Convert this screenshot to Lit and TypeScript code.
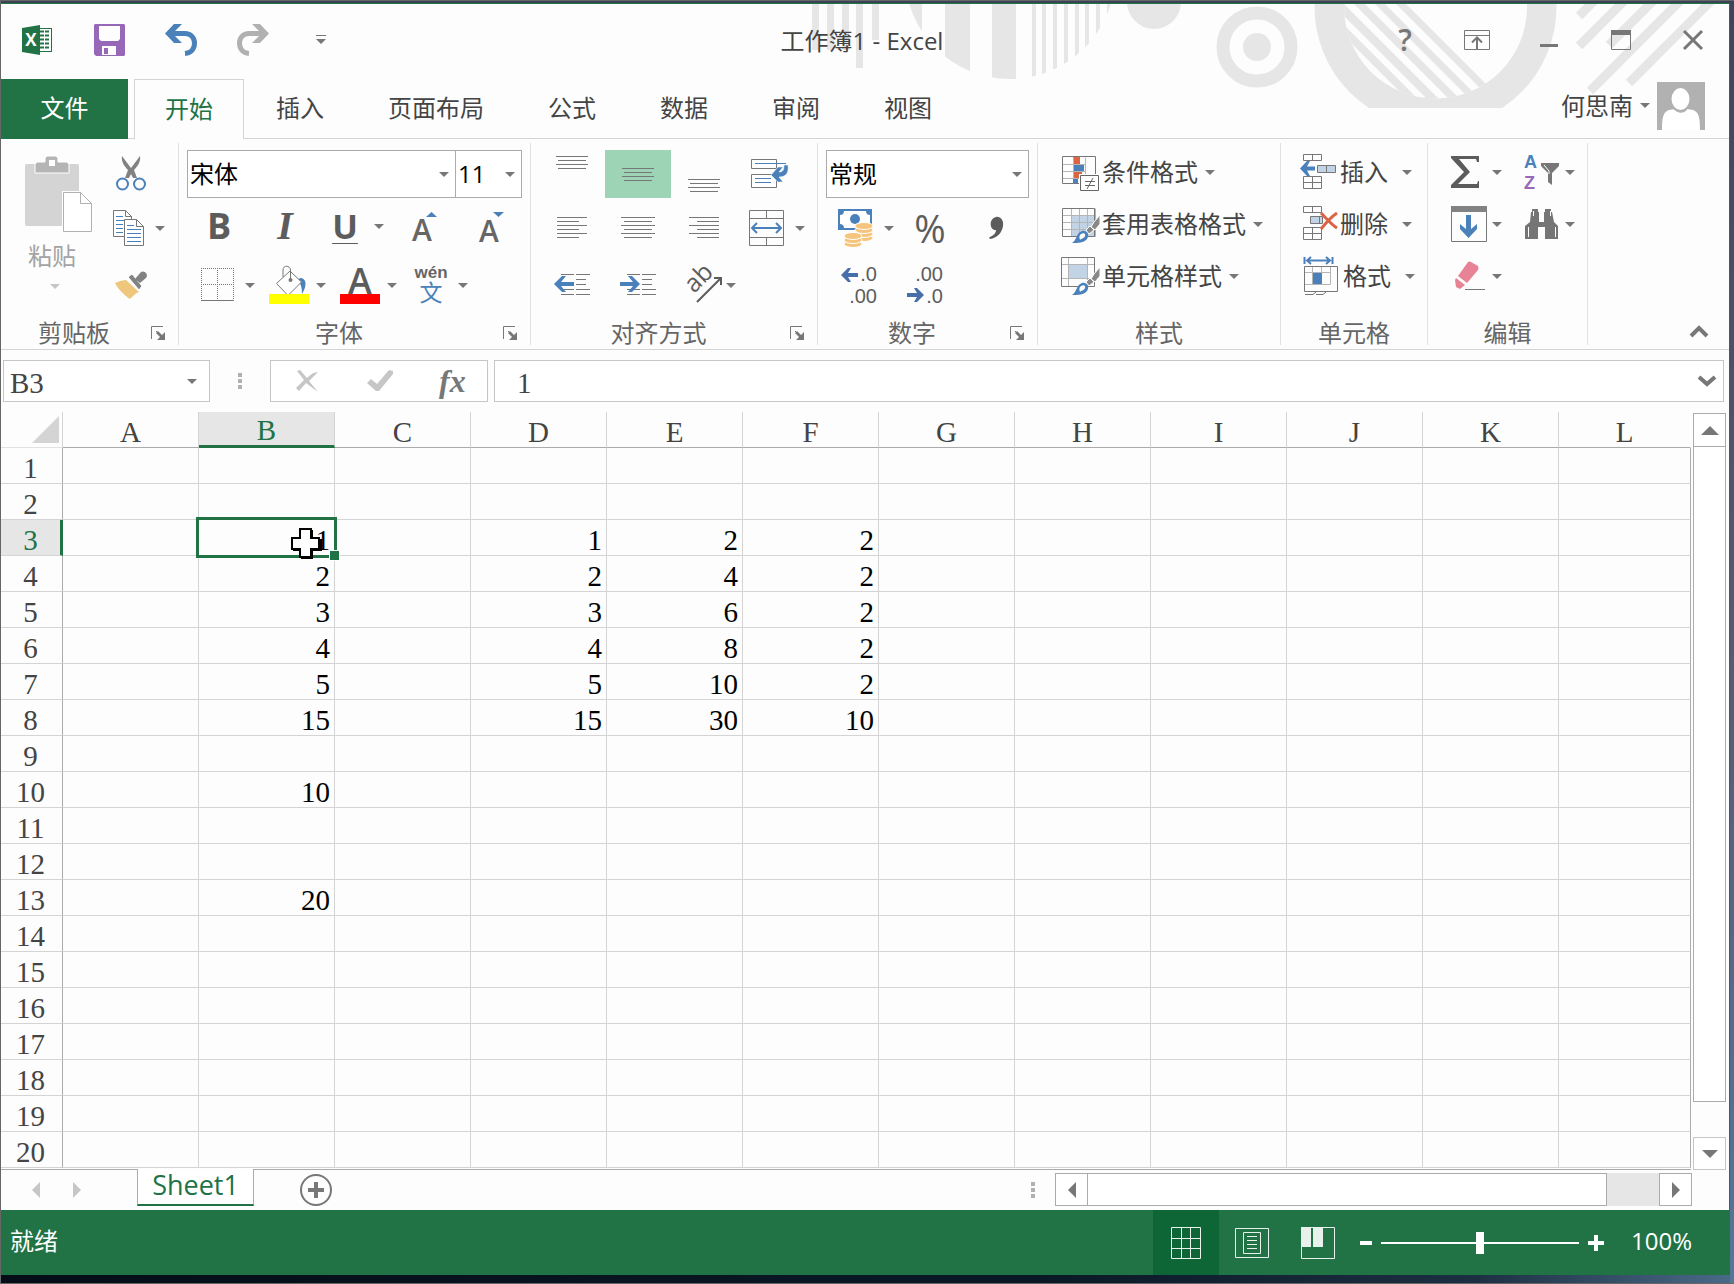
import { LitElement, html, svg, css, nothing, TemplateResult, SVGTemplateResult } from "lit";
import { customElement, state } from "lit/decorators.js";
import { classMap } from "lit/directives/class-map.js";

const GRAY = "#777";
const INK = "#5c5c5c";
const BLUE = "#4b81ba";
const PALE = "#c2d3e6";

const icon = (w: number, h: number, body: SVGTemplateResult | SVGTemplateResult[]) =>
  html`<svg width=${w} height=${h} viewBox="0 0 ${w} ${h}" aria-hidden="true">${body}</svg>`;

const caret = html`<svg class="caret" width="10" height="5" viewBox="0 0 10 5" aria-hidden="true"><path d="M0 0H10L5 5Z" /></svg>`;

/** Horizontal one-pixel strokes, each given as [x1, x2, y]. */
const strokes = (rows: number[][]) =>
  rows.map(([a, b, y]) => svg`<rect x=${a} y=${y} width=${b - a} height="1" fill=${GRAY} />`);

/** Outlined table grid. */
const mesh = (x: number, y: number, xs: number[], ys: number[], color = GRAY) => svg`
  <g fill="none" stroke=${color}>
    ${xs.map((c) => svg`<path d="M${x + c}.5 ${y}.5V${y + ys[ys.length - 1]}.5" />`)}
    ${ys.map((r) => svg`<path d="M${x}.5 ${y + r}.5H${x + xs[xs.length - 1]}.5" />`)}
  </g>`;

const brushSmall = svg`
  <path d="M39 9L33 16L30 21L34 24L39 18Z" fill="#888" stroke="#fff" />
  <path d="M29 20L25 24L28 28L33 24Z" fill="#888" stroke="#fff" />
  <path d="M11 37C16 34 15 27 21 25C26 24 29 29 26 33C23 37 17 37 11 37Z" fill=${BLUE} />
  <path d="M20 28C23 26 25 28 24 30C23 33 20 32 19 34C18 31 18 30 20 28Z" fill="#fff" />`;

const icons = {
  excel: icon(30, 30, svg`
    <rect x="17.500" y="3.500" width="12" height="23" fill="#fff" stroke="#217346" />
    ${[6, 10, 14, 18, 22].map((y) => svg`<path d="M18 ${y + 0.5}h4m1 0h4" stroke="#217346" stroke-width="2" />`)}
    <path d="M0 3L18 0V30L0 27Z" fill="#217346" />
    <text x="9" y="21" text-anchor="middle" font-family="Open Sans" font-weight="700" font-size="17" fill="#fff">X</text>`),
  save: icon(31, 32, svg`
    <path fill="#9668b7" fill-rule="evenodd" d="M1 0H30L31 1V31L30 32H2L0 30V1ZM5 2V15L7 17H24L26 15V2ZM8 22V31H22V22ZM10 24H14V30H10Z" />`),
  undo: icon(32, 32, svg`
    <path d="M9 0H17L10 7H20V12H10L17 19H9L0 9.500Z" fill=${BLUE} />
    <path d="M10 9.500H20C26 9.500 29.500 14 29.500 19C29.500 25 26 29 20 29.500" fill="none" stroke=${BLUE} stroke-width="5" />`),
  redo: icon(32, 32, svg`
    <path d="M23 0H15L22 7H12V12H22L15 19H23L32 9.500Z" fill="#b1b1b1" />
    <path d="M22 9.500H12C6 9.500 2.500 14 2.500 19C2.500 25 6 29 12 29.500" fill="none" stroke="#b1b1b1" stroke-width="5" />`),
  qat: icon(10, 10, svg`<path d="M0 0H10V1H0ZM0 4H10L5 9Z" fill=${GRAY} />`),
  ribbonOptions: icon(26, 20, svg`
    <path d="M.5 .5H25.500V19.500H.5ZM0 5.500H26" fill="none" stroke=${GRAY} />
    <path d="M13 19V8M8 12.500L13 7.500L18 12.500" fill="none" stroke=${GRAY} stroke-width="2" />`),
  minimize: icon(18, 20, svg`<path d="M0 14H18V17H0Z" fill=${GRAY} />`),
  maximize: icon(20, 20, svg`<path d="M.5 .5H19.500V19.500H.5Z" fill="none" stroke=${GRAY} /><path d="M0 0H20V5H0Z" fill=${GRAY} />`),
  close: icon(20, 20, svg`<path d="M1 1L19 19M19 1L1 19" stroke=${GRAY} stroke-width="3" />`),
  avatar: icon(48, 48, svg`
    <rect width="48" height="48" fill="#b1b1b1" />
    <path d="M5 48C5 36 6 30 12 28L18 27C20 32 28 32 30 27L36 28C42 30 43 36 43 48Z" fill="#fff" />
    <ellipse cx="23.500" cy="17" rx="10" ry="12" fill="#fff" stroke="#b1b1b1" stroke-width="2" />`),
  paste: icon(68, 76, svg`
    <rect y="8" width="54" height="62" rx="2" fill="#d4d4d4" />
    <path d="M10 17V8L12 6H20V2L22 0H31L33 2V6H42L44 8V17Z" fill="#b5b5b5" stroke="#fff" />
    <rect x="24" y="4" width="6" height="6" fill="#fff" />
    <path d="M37 35H57L68 47V76H37Z" fill="#fff" />
    <path d="M38.500 36.500H55.500L66.500 47.500V75.500H38.500ZM55.500 36.500V47.500H66.500" fill="none" stroke="#b1b1b1" />`),
  cut: icon(36, 36, svg`
    <path d="M10 0C9 5 12 10 16 14L13 22H17L19 18L21 22H25L22 14C26 10 29 5 28 0L19 12Z" fill="#828282" />
    <circle cx="10.500" cy="28" r="5.500" fill="none" stroke=${BLUE} stroke-width="2" />
    <circle cx="27.500" cy="28" r="5.500" fill="none" stroke=${BLUE} stroke-width="2" />`),
  copy: icon(36, 36, svg`
    <path d="M1.500 .5H13.500L19.500 6.500V26.500H1.500ZM13.500 .5V6.500H19.500" fill="#fff" stroke=${GRAY} />
    <path d="M4 6.500H11M4 10.500H12M4 14.500H11M4 18.500H11M4 22.500H11" stroke=${BLUE} />
    <path d="M12.500 9.500H24.500L31.500 16.500V35.500H12.500ZM24.500 9.500V16.500H31.500" fill="#fff" stroke=${GRAY} />
    <path d="M15 15.500H22M15 19.500H29M15 23.500H29M15 27.500H29M15 31.500H29" stroke=${BLUE} />`),
  painter: icon(36, 28, svg`
    <path d="M3 12L8 10L14 9L27 21C24 22 21 25 18 28C12 24 6 18 3 12Z" fill="#efc77c" />
    <path d="M16 6L20 3L30 15L27 19Z" fill="#828282" stroke="#fff" />
    <path d="M23 8L29 1C32 -1 37 3 34 7L28 12Z" fill="#828282" />`),
  borders: icon(40, 36, svg`
    <path d="M3.500 1V34M19.500 1V34M35.500 1V34M3 1.500H36M3 17.500H36" fill="none" stroke=${GRAY} stroke-dasharray="1 1" />
    <path d="M3 33.500H36" stroke=${GRAY} />`),
  fill: icon(40, 38, svg`
    <path d="M31 12C38 12 38 20 33 28C33 22 32 18 29 14Z" fill=${BLUE} />
    <path d="M7.500 17.500L21 5L32.500 16L19 29.500Z" fill="#fff" stroke=${GRAY} />
    <path d="M14 11V4C14 -1 21 -1 21.500 4V14" fill="none" stroke=${GRAY} />
    <circle cx="21.500" cy="14" r="2" fill=${GRAY} />
    <rect y="28" width="40" height="10" fill="#ff0" />`),
  fontColor: icon(40, 38, svg`
    <text x="20" y="28" text-anchor="middle" font-family="Open Sans" font-weight="600" font-size="36" fill=${INK}>A</text>
    <rect y="28" width="40" height="10" fill="#f00" />`),
  phonetic: icon(40, 38, svg`
    <text x="20" y="12" text-anchor="middle" font-family="Liberation Sans" font-weight="700" font-size="17" fill="#666">wén</text>
    <text x="20" y="35" text-anchor="middle" font-family="Noto Sans CJK SC" font-size="23" fill=${BLUE}>文</text>`),
  grow: icon(40, 32, svg`
    <text x="19" y="29" text-anchor="middle" font-family="Open Sans" font-weight="600" font-size="30" fill="#666">A</text>
    <path d="M23 5L28.500 0L34 5Z" fill=${BLUE} />`),
  shrink: icon(40, 32, svg`
    <text x="18" y="30" text-anchor="middle" font-family="Open Sans" font-weight="600" font-size="30" fill="#666">A</text>
    <path d="M22 0L27.500 5L33 0Z" fill=${BLUE} />`),
  alignTop: icon(32, 38, svg`${strokes([[0, 32, 1], [2, 30, 5], [0, 32, 9], [2, 30, 13]])}`),
  alignMiddle: icon(32, 38, svg`${strokes([[0, 32, 13], [2, 30, 17], [0, 32, 21], [2, 30, 25]])}`),
  alignBottom: icon(32, 38, svg`${strokes([[0, 32, 24], [2, 30, 28], [0, 32, 32], [2, 30, 36]])}`),
  alignLeft: icon(34, 22, svg`${strokes([[2, 32, 0], [2, 24, 4], [2, 32, 8], [2, 24, 12], [2, 32, 16], [2, 24, 20]])}`),
  alignCenter: icon(34, 22, svg`${strokes([[0, 34, 0], [3, 31, 4], [0, 34, 8], [3, 31, 12], [0, 34, 16], [3, 31, 20]])}`),
  alignRight: icon(34, 22, svg`${strokes([[2, 32, 0], [10, 32, 4], [2, 32, 8], [10, 32, 12], [2, 32, 16], [10, 32, 20]])}`),
  wrap: icon(38, 30, svg`
    <path d="M.5 .5H25.500V9.500H.5ZM.5 15.500H25.500V28.500H.5Z" fill="#fff" stroke=${GRAY} />
    <path d="M4 4.500H35M4 19.500H20M4 23.500H20" stroke=${BLUE} />
    <path d="M20 16L27 8H32L28 13C32 13 33 11 33 6H37C38 14 35 18 28 18L32 23H27Z" fill=${BLUE} stroke="#fff" stroke-width=".5" />`),
  merge: icon(36, 36, svg`
    <path d="M.5 .5H34.500V35.500H.5ZM0 8.500H35M0 27.500H35M17.500 0V8M17.500 28V36" fill="none" stroke=${GRAY} />
    <path d="M3 18H32M8 13L3 18L8 23M27 13L32 18L27 23" fill="none" stroke=${BLUE} stroke-width="2" />`),
  outdent: icon(36, 22, svg`
    ${strokes([[7, 20, 0], [22, 36, 0], [22, 32, 5], [22, 32, 10], [7, 20, 15], [22, 36, 15], [7, 20, 20], [22, 36, 20]])}
    <path d="M0 10L8 2H12L7 8H20V12H7L12 18H8Z" fill=${BLUE} />`),
  indent: icon(36, 22, svg`
    ${strokes([[7, 20, 0], [22, 36, 0], [22, 32, 5], [22, 32, 10], [7, 20, 15], [22, 36, 15], [7, 20, 20], [22, 36, 20]])}
    <path d="M20 10L12 2H8L13 8H0V12H13L8 18H12Z" fill=${BLUE} />`),
  orient: icon(37, 36, svg`
    <text transform="translate(9 27) rotate(-45)" font-family="Open Sans" font-size="25" fill=${INK}>ab</text>
    <path d="M12 35L36 11M29 11H36V18" fill="none" stroke=${INK} stroke-width="2" />`),
  currency: icon(36, 38, svg`
    <path d="M0 0H34V21H0Z" fill=${BLUE} />
    <path d="M6 2H28C28 5 30 6 32 6V14C29 14 28 16 28 19H6C6 16 4 15 2 15V6C4 6 6 5 6 2Z" fill="#fff" />
    <circle cx="17" cy="10" r="5" fill=${BLUE} />
    <g fill="#f5c57d" stroke="#fff">
      <ellipse cx="26" cy="29" rx="9" ry="3.500" /><ellipse cx="26" cy="25" rx="9" ry="3.500" /><ellipse cx="26" cy="21" rx="9" ry="3.500" /><ellipse cx="26" cy="17" rx="9" ry="3.500" />
      <ellipse cx="15" cy="35" rx="9" ry="3.500" /><ellipse cx="15" cy="31" rx="9" ry="3.500" /><ellipse cx="15" cy="27" rx="9" ry="3.500" />
    </g>`),
  comma: icon(46, 24, svg`
    <path d="M23 1C27 0 31 4 30 10C29 17 24 22 17 23C16 22 16 21 17 21C21 19 23 17 23 14C17 15 15 3 23 1Z" fill=${INK} />`),
  moreDecimals: icon(40, 38, svg`
    <path d="M3 9L10 2H13L10 7H20V11H10L13 16H10Z" fill="#466ea9" />
    <g font-family="Liberation Sans" font-size="20" fill=${INK} text-anchor="end"><text x="39" y="15">.0</text><text x="39" y="37">.00</text></g>`),
  fewerDecimals: icon(40, 38, svg`
    <path d="M17 29L10 22H7L10 27H0V31H10L7 36H10Z" fill="#466ea9" />
    <g font-family="Liberation Sans" font-size="20" fill=${INK} text-anchor="end"><text x="36" y="15">.00</text><text x="36" y="37">.0</text></g>`),
  conditional: icon(40, 36, svg`
    <rect x="12" y="3" width="7" height="7" fill="#db6445" /><rect x="12" y="10" width="11" height="7" fill=${BLUE} />
    <rect x="12" y="17" width="9" height="7" fill="#db6445" /><rect x="12" y="24" width="5" height="6" fill=${BLUE} />
    ${mesh(1, 3, [11, 23], [7, 14, 21], "#b5b5b5")}
    <path d="M1.500 2.500H34.500V29.500H1.500Z" fill="none" stroke=${GRAY} />
    <rect x="18" y="20" width="21" height="17" fill="#fff" />
    <path d="M19.500 21.500H37.500V36.500H19.500ZM24 27.500H34M24 31.500H34M32 24L26 35" fill="none" stroke="#666" />`),
  tableFormat: icon(40, 36, svg`
    <rect x="10" y="9" width="24" height="21" fill=${PALE} />
    ${mesh(1, 2, [9, 17, 25, 33], [7, 14, 21, 28], "#b5b5b5")}
    <path d="M1.500 2.500H33.500V30.500H1.500Z" fill="none" stroke=${GRAY} />
    ${brushSmall}`),
  cellStyle: icon(40, 36, svg`
    <path d="M.5 6.500H34M.5 20.500H34M7.500 0V28M26.500 0V28" stroke="#b5b5b5" />
    <rect x="8" y="7" width="18" height="13" fill=${PALE} />
    <path d="M.5 -.5H33.500V28.500H.5Z" fill="none" stroke=${GRAY} />
    ${brushSmall}`),
  insertCells: icon(40, 36, svg`
    ${mesh(4, 0, [0, 9, 18], [0, 6])} ${mesh(4, 22, [0, 9, 18], [0, 6, 12])}
    <rect x="18" y="11" width="18" height="7" fill=${PALE} />${mesh(18, 11, [0, 9, 18], [0, 7])}
    <path d="M1 14.500L8 7H11L8 12.500H16V16.500H8L11 22H8Z" fill=${BLUE} />`),
  deleteCells: icon(40, 36, svg`
    ${mesh(4, 0, [0, 9, 18], [0, 6])} ${mesh(4, 21, [0, 9, 18], [0, 6, 12])}
    <rect x="11" y="10" width="12" height="7" fill=${PALE} />${mesh(11, 10, [0, 9, 12], [0, 7])}
    <path d="M22 7C27 12 33 19 38 22M38 7C32 11 26 18 22 23" fill="none" stroke="#db6445" stroke-width="3" />`),
  formatCells: icon(43, 38, svg`
    <path d="M5.500 0V7M33.500 0V7M8 3.500H31M12 0L8 3.500L12 7M27 0L31 3.500L27 7" fill="none" stroke=${BLUE} stroke-width="2" />
    ${mesh(5, 9, [8, 17, 26], [6, 18], "#b5b5b5")}
    <path d="M5.500 9.500H38.500V34.500H5.500ZM6 37.500H14L17 35M17 37.500H24L27 35" fill="none" stroke=${GRAY} />
    <rect x="14" y="16" width="9" height="11" fill=${BLUE} />`),
  sum: icon(36, 34, svg`<path d="M0 1H28V7H26L25 4H8L19 17L7 29H26L27 26H28V33H0V30L13 17L0 3Z" fill=${INK} />`),
  sort: icon(36, 36, svg`
    <text x="0" y="14" font-family="Liberation Sans" font-weight="700" font-size="18" fill=${BLUE}>A</text>
    <text x="0" y="35" font-family="Liberation Sans" font-weight="700" font-size="18" fill="#9668b7">Z</text>
    <path d="M17 9H35V12L28 19V31L24 28V19L17 12Z" fill=${GRAY} /><path d="M20 11L25 17V20" stroke="#fff" fill="none" />`),
  fillDown: icon(36, 36, svg`
    <path d="M.5 .5H35.500V35.500H.5Z" fill="none" stroke=${GRAY} /><rect width="36" height="6" fill="#828282" />
    <path d="M15 9H20V23L26 18V23L17.500 32L9 23V18L15 23Z" fill=${BLUE} />`),
  find: icon(36, 32, svg`
    <path d="M8 1H14V4H15V14H20V4H21V1H27V4H28L30 14L34 18V31H21V19H14V31H1V18L6 14L7 4H8Z" fill="#757575" />
    <path d="M4.500 19V29M9.500 3V8M26.500 3V8M31.500 19V29" stroke="#fff" />`),
  eraser: icon(36, 30, svg`
    <path d="M17 1Q19 0 20 1L27 5Q28 7 27 9L16 22L7 15Z" fill="#e78394" />
    <path d="M5 17L14 24L9 28L5 26L4 19Z" fill="#e78394" /><path d="M14 28.500H34" stroke=${GRAY} />`),
  launcher: icon(15, 14, svg`<path d="M.5 13V.5H12M5 5L9 9" fill="none" stroke=${GRAY} /><path d="M14 6V14H6L9 11L5 7L7 5L11 9Z" fill=${GRAY} />`),
  collapse: icon(18, 12, svg`<path d="M1 10L9 2L17 10" fill="none" stroke=${GRAY} stroke-width="4" />`),
  expand: icon(18, 12, svg`<path d="M1 2L9 9L17 2" fill="none" stroke=${GRAY} stroke-width="4" />`),
  dots: icon(4, 16, svg`<path d="M0 0H4V4H0ZM0 6H4V10H0ZM0 12H4V16H0Z" fill="#b1b1b1" />`),
  cancel: icon(24, 22, svg`<path d="M2 1L5 0L12 8C16 4 19 2 23 2L14 11L23 22L11 13L4 21L1 18L9 10Z" fill="#c6c6c6" />`),
  accept: icon(26, 22, svg`<path d="M0 13L4 9L10 14L22 0L26 1V4L12 21H9Z" fill="#c6c6c6" />`),
  cursor: html`<svg class="pointer" width="31" height="31" viewBox="0 0 31 31" aria-hidden="true">
    <path d="M10 2H22V11H31V23H22V31H10V23H2V11H10Z" />
    <path d="M9 1H20V10H28V21H20V29H9V21H1V10H9Z" fill="#fff" stroke="#000" stroke-width="2" /></svg>`,
  normalView: icon(32, 32, svg`<path d="M1.500 .5H30.500V31.500H1.500ZM11.500 0V32M20.500 0V32M1 11.500H31M1 21.500H31" fill="none" stroke="#e8f1ec" />`),
  pageLayout: icon(34, 30, svg`<path d="M.5 .5H33.500V29.500H.5ZM8.500 4.500H25.500V25.500H8.500ZM12 8.500H22M12 12.500H22M12 16.500H22M12 20.500H22" fill="none" stroke="#e8f1ec" />`),
  pageBreak: icon(34, 32, svg`<path d="M.5 .5H33.500V31.500H.5Z" fill="none" stroke="#e8f1ec" /><path d="M0 0H10V20H0ZM12 0H22V20H12Z" fill="#e8f1ec" />`),
  addSheet: icon(32, 32, svg`<circle cx="16" cy="16" r="15" fill="none" stroke=${GRAY} stroke-width="2" /><path d="M8 16H24M16 8V24" stroke=${GRAY} stroke-width="4" />`),
  minus: icon(12, 12, svg`<path d="M0 4H12V8H0Z" fill="#fff" />`),
  plus: icon(16, 16, svg`<path d="M0 6H6V0H10V6H16V10H10V16H6V10H0Z" fill="#fff" />`),
};

const triangle = (d: string, w: number, h: number, fill = GRAY) => icon(w, h, svg`<path d=${d} fill=${fill} />`);

const artwork = svg`
  <defs>
    <clipPath id="disc"><circle cx="1010" cy="-26" r="105" /></clipPath>
    <clipPath id="inner"><circle cx="1435.500" cy="7" r="91.500" /></clipPath>
    <clipPath id="band"><rect x="1300" y="0" width="270" height="108" /></clipPath>
  </defs>
  <g fill="#e6e6e6">
    ${[[812, 50], [827, 50], [842, 50], [856, 68], [872, 40]].map(([x, h]) => svg`<rect x=${x} y="0" width="7" height=${h} />`)}
    <g clip-path="url(#disc)">
      ${[[905, 17], [945, 25], [992, 24], [1032, 4], [1042, 4], [1053, 4], [1064, 4], [1075, 4], [1085, 4], [1096, 4], [1107, 4]].map(
        ([x, w]) => svg`<rect x=${x} y="0" width=${w} height="90" />`)}
    </g>
    <circle cx="1154" cy="2" r="27" />
    <circle cx="1257" cy="47" r="34" fill="none" stroke="#e6e6e6" stroke-width="13" />
    <circle cx="1257" cy="47" r="14" />
    <g clip-path="url(#band)"><circle cx="1435.500" cy="7" r="121" /></g>
    <circle cx="1435.500" cy="7" r="91.500" fill="#fdfdfd" />
    <g clip-path="url(#inner)">
      ${[[-2, 9], [18, 30], [40, 51], [61, 71], [82, 92]].map(
        ([a, b]) => svg`<path d="M${1310 + a} 0H${1310 + b}L${1430 + b} 120H${1430 + a}Z" />`)}
    </g>
  </g>
  <g stroke="#e6e6e6" stroke-width="9">
    ${[[1579, 16], [1579, 46], [1609, 45], [1590, 91], [1629, 83]].map(([x, y]) => svg`<path d="M${x} ${y}l100 -100" />`)}
  </g>`;

const CELLS: Record<string, number> = {
  B3: 1, B4: 2, B5: 3, B6: 4, B7: 5, B8: 15, B10: 10, B13: 20,
  D3: 1, D4: 2, D5: 3, D6: 4, D7: 5, D8: 15,
  E3: 2, E4: 4, E5: 6, E6: 8, E7: 10, E8: 30,
  F3: 2, F4: 2, F5: 2, F6: 2, F7: 2, F8: 10,
};
const COLUMNS = "ABCDEFGHIJKL".split("");
const ROWS = Array.from({ length: 20 }, (_, i) => i + 1);

@customElement("app-root")
export class AppRoot extends LitElement {
  @state() private selected = "B3";

  static styles = css`
    :host { display: block; color: #444; font: 24px/32px "Open Sans", "Noto Sans CJK SC", sans-serif; }
    * { box-sizing: border-box; }
    button, input, select { font: inherit; color: inherit; margin: 0; padding: 0; border: 0; border-radius: 0; background: none; outline: 0; }
    button { display: flex; align-items: center; white-space: nowrap; }
    select { appearance: none; }
    svg { display: block; flex: none; overflow: visible; }
    .caret { fill: #777; }

    .desktop { min-height: 100vh; display: flex; flex-direction: column; padding: 2px 4px 8px 0; border: 1px solid #666; border-right: 0;
      background: linear-gradient(#3a4454, #3a4454) top / 100% 2px no-repeat,
        linear-gradient(#40445a, #565b70 50%, #54779a) right / 4px 100% no-repeat,
        linear-gradient(90deg, #040d17 0%, #0a1826 60%, #1c2f42 85%, #4a6a88 100%); }
    .window { flex: 1; display: flex; flex-direction: column; background: #fdfdfd; border-top: 1px solid #217346; border-right: 1px solid #217346; position: relative; }
    .artwork { position: absolute; top: 0; right: -5px; overflow: hidden; pointer-events: none; clip-path: inset(0 5px 0 0); }

    .titlebar { position: relative; display: grid; grid-template-columns: 1fr auto 1fr; align-items: center; height: 75px; padding-bottom: 3px; }
    .quick, .controls { display: flex; }
    .quick button, .controls button { width: 72px; height: 40px; justify-content: center; }
    .quick .more { width: 64px; }
    .controls { justify-content: flex-end; }
    .title { margin: 0; padding: 2px 6px 0 0; font: inherit; }
    .help { font-size: 30px; font-weight: 600; color: #777; }

    .tabs { position: relative; display: flex; height: 60px; border-bottom: 1px solid #d4d4d4; }
    .tabs button { padding: 0 32px 2px; }
    .tabs .file { width: 127px; height: 60px; padding: 0 0 2px; justify-content: center; background: #217346; color: #fff; margin-right: 6px; }
    .tabs .current { width: 110px; height: 60px; padding: 0 0 2px; justify-content: center; border: 1px solid #d4d4d4; border-bottom: 0; color: #217346; background: #fdfdfd; }
    .tabs .user { margin-left: auto; padding: 0 24px 6px 0; gap: 7px; }

    .ribbon { display: flex; height: 211px; border-bottom: 1px solid #d4d4d4; }
    .group { display: flex; flex-direction: column; margin: 4px 0; padding-top: 7px; border-right: 1px solid #e1e1e1; }
    .group.clipboard { width: 178px; }
    .group.font { width: 352px; }
    .group.align { width: 287px; }
    .group.number { width: 220px; }
    .group.styles { width: 243px; }
    .group.cells { width: 147px; }
    .group.edit { width: 160px; }
    .group.wide { padding-top: 3px; }
    .body { flex: 1; }
    .footer { display: flex; align-items: center; height: 33px; padding-top: 8px; color: #666; }
    .footer span { flex: 1; text-align: center; }
    .footer button { width: 31px; padding-left: 4px; }
    .row { display: grid; align-items: center; }
    .r1 { height: 48px; }
    .r2 { height: 60px; }
    .r3 { height: 54px; }
    .tool { gap: 7px; }

    .clipboard .body { display: flex; padding-left: 24px; gap: 20px; }
    .paste { flex-direction: column; align-items: flex-start; width: 67px; padding-top: 6px; color: #a3a3a3; }
    .paste span { padding: 8px 0 0 3px; }
    .paste .caret { margin: 12px 0 0 25px; fill: #c6c6c6; }

    .combo { display: grid; align-items: center; height: 48px; border: 1px solid #ababab; background: #fff; color: #000; }
    .combo select, .combo .caret { grid-area: 1 / 1; }
    .combo select { width: 100%; height: 46px; padding-left: 2px; }
    .combo .caret { justify-self: end; margin-right: 6px; pointer-events: none; }
    .font .body { padding-left: 8px; }
    .font .r1 { grid-template-columns: 269px 66px; }
    .font .r2 { padding-left: 12px; grid-template-columns: 66px 60px 78px 68px 40px; }
    .font .r3 { padding-left: 11px; grid-template-columns: repeat(4, 71px); }
    .font .combo + .combo { border-left: 0; }
    .letter { width: 40px; justify-content: center; padding-bottom: 4px; font-size: 36px; font-weight: 700; color: #5c5c5c; }
    .italic { font-family: "Liberation Serif", serif; font-style: italic; font-size: 40px; }
    .under { width: auto; justify-content: flex-start; gap: 9px; }
    .under span { width: 40px; text-align: center; font-size: 34px; text-decoration: underline; text-decoration-thickness: 1px; text-underline-offset: 4px; }

    .align .body { padding-left: 8px; }
    .align .row { grid-template-columns: repeat(4, 66px); }
    .align .row button { justify-content: center; height: 48px; }
    .align .active { background: #9ed4b6; }
    .align .row .merge { justify-content: flex-start; padding-left: 12px; gap: 10px; }
    .align .row .orient { justify-content: flex-start; padding-left: 14px; gap: 4px; }

    .number .body { padding-left: 8px; }
    .number .combo { width: 203px; }
    .number .r2, .number .r3 { padding-left: 12px; grid-template-columns: 69px 66px 46px; }
    .number .tool { gap: 10px; }
    .percent { justify-content: center; width: 46px; font-size: 38px; color: #5c5c5c; }

    .list button { height: 52px; gap: 7px; }
    .list button span { margin-left: -6px; }
    .styles .list { padding-left: 23px; }
    .cells .list { padding-left: 18px; }
    .cells .list .caret { margin-left: 7px; }
    .edit .list { display: grid; grid-template-columns: 73px 60px; grid-auto-rows: 52px; padding-left: 23px; }
    .edit .list button { gap: 5px; }
    .collapse { margin-left: auto; align-self: flex-end; padding: 0 21px 11px 0; }

    .formula { display: flex; height: 62px; padding: 10px 5px 10px 2px; font: 29px/40px "Liberation Serif", "Noto Sans CJK SC", serif; }
    .namebox, .entry, .actions { display: flex; align-items: center; border: 1px solid #c6c6c6; background: #fff; }
    .namebox { width: 207px; padding: 0 12px 0 6px; }
    .namebox input, .entry input { flex: 1; min-width: 0; height: 40px; padding-top: 4px; }
    .grip { display: flex; align-items: center; padding: 0 28px; }
    .actions { width: 218px; padding-left: 24px; }
    .actions button { flex: none; width: 72px; }
    .actions .fx { width: 40px; font-style: italic; font-weight: 700; font-size: 32px; color: #777; }
    .entry { flex: 1; margin-left: 6px; padding: 0 7px 0 22px; }

    .sheet { flex: 1; display: flex; font: 29px/35px "Liberation Serif", serif; }
    .gridbox { flex: 1; min-width: 0; overflow: hidden; padding-bottom: 1px; border-bottom: 1px solid #ababab; }
    table { width: 100%; table-layout: fixed; border-collapse: separate; border-spacing: 0; }
    .rowhead { width: 62px; }
    .colhead { width: 136px; }
    th, td { height: 36px; padding: 4px 4px 0 0; border-right: 1px solid #d4d4d4; border-bottom: 1px solid #d4d4d4; font-weight: 400; line-height: 30px; }
    thead th { border-bottom-color: #ababab; padding: 4px 0 0; }
    tbody th { border-right-color: #ababab; padding: 4px 2px 0 0; }
    td { text-align: right; color: #000; position: relative; }
    .stretch { width: auto; }
    td:last-child { border-right-color: #ababab; }
    thead th:last-child { border-right-color: transparent; }
    thead .corner { border-bottom-color: #e1e1e1; padding: 0 3px 0 0; }
    .corner svg { margin-left: auto; }
    thead .hot { background: #e6e6e6; color: #217346; border-bottom: 3px solid #217346; padding: 3px 0 0; line-height: 29px; }
    tbody .hot { background: #e6e6e6; color: #217346; border-right: 3px solid #217346; padding-right: 0; }
    .selection { position: absolute; inset: -3px; border: 3px solid #217346; z-index: 1; }
    .handle { position: absolute; right: -5px; bottom: -5px; width: 9px; height: 9px; background: #217346; outline: 1px solid #fff; }
    .pointer { position: absolute; left: 92px; top: 8px; }

    .vbar { display: flex; flex-direction: column; width: 38px; padding: 1px 3px 0 2px; }
    .vbar button, .hbar button { justify-content: center; border: 1px solid #ababab; background: #fff; }
    .vbar button { height: 34px; }
    .vbar .down { height: 33px; border-color: #c6c6c6; }
    .vbar .thumb { flex: 657; margin-top: -1px; border: 1px solid #ababab; background: #fff; }
    .vbar .track { flex: 35; }

    .sheets { display: flex; align-items: flex-start; height: 40px; padding: 0 37px 0 14px; }
    .sheets .nav { width: 41px; height: 40px; justify-content: center; }
    .sheets .tab { position: relative; justify-content: center; width: 117px; height: 37px; margin: -1px 46px 0 40px; padding-bottom: 3px; border: 1px solid #ababab; border-top: 0;
      border-bottom: 2px solid #217346; background: #fff; color: #217346; font-size: 27px; }
    .sheets .add { margin-top: 4px; }
    .sheets .space { flex: 699; }
    .sheets .split { margin: 12px 20px 0 0; }
    .hbar { flex: 637; display: flex; height: 33px; margin-top: 3px; }
    .hbar button { width: 33px; }
    .hbar .thumb { flex: 520; margin-left: -1px; border: 1px solid #ababab; background: #fff; }
    .hbar .track { flex: 52; background: #e6e6e6; }

    .status { display: flex; align-items: center; height: 65px; padding: 0 37px 0 9px; background: #217346; color: #fff; }
    .status span { padding-bottom: 3px; }
    .status .views { display: flex; margin-left: auto; }
    .status .views button { width: 66px; height: 65px; justify-content: center; }
    .status .views .on { background: #0e6636; }
    .zoom { width: 30px; height: 32px; justify-content: center; }
    .zoom.in { width: 34px; }
    .slider { appearance: none; width: 198px; height: 24px; background: linear-gradient(#fff, #fff) center / 100% 2px no-repeat; }
    .slider::-webkit-slider-thumb { appearance: none; width: 8px; height: 22px; background: #fff; border: 0; }
    .percentage { width: 79px; text-align: right; }
  `;

  private tool(label: string, art: TemplateResult, drop = false, cls = "") {
    return html`<button class="tool ${cls}" aria-label=${label}>${art}${drop ? caret : nothing}</button>`;
  }

  private item(label: string, art: TemplateResult) {
    return html`<button>${art}<span>${label}</span>${caret}</button>`;
  }

  private group(cls: string, label: string, body: TemplateResult, launcher = true) {
    return html`<section class="group ${cls}" aria-label=${label}>
      ${body}
      <div class="footer"><span>${label}</span>${launcher ? html`<button aria-label=${label}>${icons.launcher}</button>` : nothing}</div>
    </section>`;
  }

  private combo(label: string, value: string) {
    return html`<label class="combo"><select aria-label=${label}><option>${value}</option></select>${caret}</label>`;
  }

  private renderRibbon() {
    return html`<div class="ribbon">
      ${this.group("clipboard", "剪贴板", html`<div class="body">
        <button class="paste">${icons.paste}<span>粘贴</span>${caret}</button>
        <div>
          <div class="row r1">${this.tool("剪切", icons.cut)}</div>
          <div class="row r2">${this.tool("复制", icons.copy, true)}</div>
          <div class="row r3">${this.tool("格式刷", icons.painter)}</div>
        </div>
      </div>`)}
      ${this.group("font", "字体", html`<div class="body">
        <div class="row r1">${this.combo("字体", "宋体")}${this.combo("字号", "11")}</div>
        <div class="row r2">
          <button class="letter">B</button>
          <button class="letter italic">I</button>
          <button class="letter under"><span>U</span>${caret}</button>
          ${this.tool("增大字号", icons.grow)}${this.tool("减小字号", icons.shrink)}
        </div>
        <div class="row r3">
          ${this.tool("边框", icons.borders, true)}${this.tool("填充颜色", icons.fill, true)}
          ${this.tool("字体颜色", icons.fontColor, true)}${this.tool("拼音", icons.phonetic, true)}
        </div>
      </div>`)}
      ${this.group("align", "对齐方式", html`<div class="body">
        <div class="row r1">
          ${this.tool("顶端对齐", icons.alignTop)}${this.tool("垂直居中", icons.alignMiddle, false, "active")}
          ${this.tool("底端对齐", icons.alignBottom)}${this.tool("自动换行", icons.wrap)}
        </div>
        <div class="row r2">
          ${this.tool("左对齐", icons.alignLeft)}${this.tool("居中", icons.alignCenter)}
          ${this.tool("右对齐", icons.alignRight)}${this.tool("合并后居中", icons.merge, true, "merge")}
        </div>
        <div class="row r3">
          ${this.tool("减少缩进量", icons.outdent)}${this.tool("增加缩进量", icons.indent)}${this.tool("方向", icons.orient, true, "orient")}
        </div>
      </div>`)}
      ${this.group("number", "数字", html`<div class="body">
        <div class="row r1">${this.combo("数字格式", "常规")}</div>
        <div class="row r2">
          ${this.tool("会计数字格式", icons.currency, true)}<button class="percent">%</button>${this.tool("千位分隔样式", icons.comma)}
        </div>
        <div class="row r3">${this.tool("增加小数位数", icons.moreDecimals)}${this.tool("减少小数位数", icons.fewerDecimals)}</div>
      </div>`)}
      ${this.group("styles wide", "样式", html`<div class="body list">
        ${this.item("条件格式", icons.conditional)}${this.item("套用表格格式", icons.tableFormat)}${this.item("单元格样式", icons.cellStyle)}
      </div>`, false)}
      ${this.group("cells wide", "单元格", html`<div class="body list">
        ${this.item("插入", icons.insertCells)}${this.item("删除", icons.deleteCells)}${this.item("格式", icons.formatCells)}
      </div>`, false)}
      ${this.group("edit wide", "编辑", html`<div class="body list">
        ${this.tool("求和", icons.sum, true, "sum")}${this.tool("排序和筛选", icons.sort, true)}
        ${this.tool("填充", icons.fillDown, true)}${this.tool("查找和选择", icons.find, true)}
        ${this.tool("清除", icons.eraser, true)}
      </div>`, false)}
      <button class="collapse" aria-label="折叠功能区">${icons.collapse}</button>
    </div>`;
  }

  private renderCell(col: string, row: number) {
    const id = col + row;
    const on = id === this.selected;
    return html`<td @click=${() => (this.selected = id)}>${CELLS[id] ?? nothing}${on
      ? html`<div class="selection"><i class="handle"></i>${icons.cursor}</div>` : nothing}</td>`;
  }

  private renderSheet() {
    const col = this.selected[0];
    const row = Number(this.selected.slice(1));
    return html`<div class="sheet">
      <div class="gridbox"><table>
        <colgroup><col class="rowhead" />${COLUMNS.map((_, i) => html`<col class=${i < COLUMNS.length - 1 ? "colhead" : "stretch"} />`)}</colgroup>
        <thead><tr>
          <th class="corner">${triangle("M27 0V27H0Z", 27, 27, "#d4d4d4")}</th>
          ${COLUMNS.map((c) => html`<th scope="col" class=${classMap({ hot: c === col })}>${c}</th>`)}
        </tr></thead>
        <tbody>${ROWS.map((r) => html`<tr>
          <th scope="row" class=${classMap({ hot: r === row })}>${r}</th>${COLUMNS.map((c) => this.renderCell(c, r))}
        </tr>`)}</tbody>
      </table></div>
      <div class="vbar">
        <button aria-label="向上滚动">${triangle("M0 9L9 0L18 9Z", 18, 9)}</button>
        <div class="thumb"></div><div class="track"></div>
        <button class="down" aria-label="向下滚动">${triangle("M0 0H16L8 8Z", 16, 8)}</button>
      </div>
    </div>`;
  }

  render() {
    return html`<div class="desktop"><main class="window">
      <svg class="artwork" width="922" height="108" viewBox="812 4 922 108" aria-hidden="true">${artwork}</svg>
      <header class="titlebar">
        <div class="quick">
          <button aria-label="Excel">${icons.excel}</button>
          <button aria-label="保存">${icons.save}</button>
          <button aria-label="撤消">${icons.undo}</button>
          <button aria-label="恢复">${icons.redo}</button>
          <button class="more" aria-label="自定义快速访问工具栏">${icons.qat}</button>
        </div>
        <h1 class="title">工作簿1 - Excel</h1>
        <div class="controls">
          <button class="help">?</button>
          <button aria-label="功能区显示选项">${icons.ribbonOptions}</button>
          <button aria-label="最小化">${icons.minimize}</button>
          <button aria-label="最大化">${icons.maximize}</button>
          <button aria-label="关闭">${icons.close}</button>
        </div>
      </header>
      <nav class="tabs">
        <button class="file">文件</button><button class="current">开始</button>
        ${["插入", "页面布局", "公式", "数据", "审阅", "视图"].map((t) => html`<button>${t}</button>`)}
        <button class="user">何思南${caret}${icons.avatar}</button>
      </nav>
      ${this.renderRibbon()}
      <div class="formula">
        <label class="namebox"><input aria-label="名称框" .value=${this.selected} />${caret}</label>
        <span class="grip">${icons.dots}</span>
        <div class="actions">
          <button aria-label="取消">${icons.cancel}</button>
          <button aria-label="输入">${icons.accept}</button>
          <button class="fx">fx</button>
        </div>
        <label class="entry"><input aria-label="编辑栏" .value=${String(CELLS[this.selected] ?? "")} />${icons.expand}</label>
      </div>
      ${this.renderSheet()}
      <div class="sheets">
        <button class="nav" aria-label="上一个">${triangle("M8 0V16L0 8Z", 8, 16, "#c6c6c6")}</button>
        <button class="nav" aria-label="下一个">${triangle("M0 0V16L8 8Z", 8, 16, "#c6c6c6")}</button>
        <button class="tab">Sheet1</button>
        <button class="add" aria-label="新工作表">${icons.addSheet}</button>
        <div class="space"></div>
        <span class="split">${icons.dots}</span>
        <div class="hbar">
          <button aria-label="向左滚动">${triangle("M8 0V16L0 8Z", 8, 16)}</button>
          <div class="thumb"></div><div class="track"></div>
          <button aria-label="向右滚动">${triangle("M0 0V16L8 8Z", 8, 16)}</button>
        </div>
      </div>
      <footer class="status">
        <span>就绪</span>
        <div class="views">
          <button class="on" aria-label="普通">${icons.normalView}</button>
          <button aria-label="页面布局">${icons.pageLayout}</button>
          <button aria-label="分页预览">${icons.pageBreak}</button>
        </div>
        <button class="zoom" aria-label="缩小">${icons.minus}</button>
        <input class="slider" type="range" aria-label="缩放" min="0" max="200" value="100" />
        <button class="zoom in" aria-label="放大">${icons.plus}</button>
        <span class="percentage">100%</span>
      </footer>
    </main></div>`;
  }
}
